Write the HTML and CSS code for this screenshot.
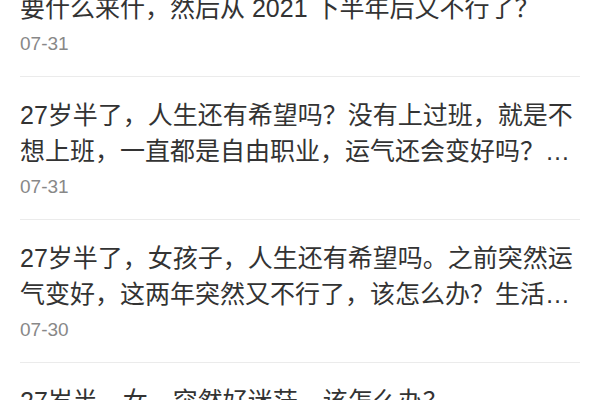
FILE: index.html
```html
<!DOCTYPE html>
<html lang="zh-CN">
<head>
<meta charset="utf-8">
<title>列表</title>
<link rel="stylesheet" href="styles.css">
</head>
<body>
<ul class="list">
  <li class="item partial">
    <p class="title">要什么来什，然后从 2021 下半年后又不行了？</p>
    <p class="date">07-31</p>
  </li>
  <li class="item">
    <p class="title">27岁半了，人生还有希望吗？没有上过班，就是不想上班，一直都是自由职业，运气还会变好吗？…</p>
    <p class="date">07-31</p>
  </li>
  <li class="item">
    <p class="title">27岁半了，女孩子，人生还有希望吗。之前突然运气变好，这两年突然又不行了，该怎么办？生活…</p>
    <p class="date">07-30</p>
  </li>
  <li class="item">
    <p class="title">27岁半，女，突然好迷茫，该怎么办？</p>
    <p class="date">07-30</p>
  </li>
</ul>
</body>
</html>
```
FILE: styles.css
```css
html, body {
  margin: 0;
  padding: 0;
  background: #ffffff;
  overflow: hidden;
}
.list {
  list-style: none;
  margin: 0;
  padding: 0;
}
.item {
  margin: 0 20px;
  padding: 20px 0 19px;
  border-bottom: 1px solid #ebebeb;
}
.item.partial {
  padding-top: 0;
  margin-top: -10px;
}
.title {
  margin: 0;
  font-family: "Liberation Sans", "Noto Sans CJK SC", sans-serif;
  font-size: 25px;
  line-height: 36px;
  color: #333333;
}
.date {
  margin: 5px 0 0;
  font-family: "Liberation Sans", "Noto Sans CJK SC", sans-serif;
  font-size: 19px;
  line-height: 26px;
  color: #888888;
}
```
